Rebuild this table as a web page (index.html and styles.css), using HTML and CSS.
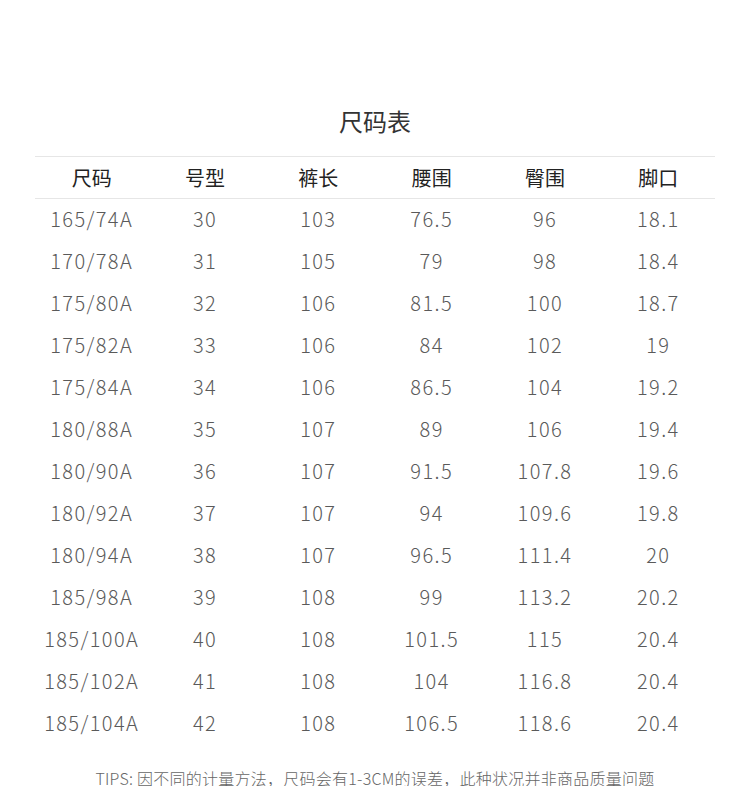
FILE: index.html
```html
<!DOCTYPE html>
<html lang="zh">
<head>
<meta charset="utf-8">
<title>尺码表</title>
<link rel="stylesheet" href="styles.css">
</head>
<body>
<div class="page">
  <h1 class="title">尺码表</h1>
  <div class="table">
    <div class="row head">
      <div>尺码</div><div>号型</div><div>裤长</div><div>腰围</div><div>臀围</div><div>脚口</div>
    </div>
    <div class="row"><div>165/74A</div><div>30</div><div>103</div><div>76.5</div><div>96</div><div>18.1</div></div>
    <div class="row"><div>170/78A</div><div>31</div><div>105</div><div>79</div><div>98</div><div>18.4</div></div>
    <div class="row"><div>175/80A</div><div>32</div><div>106</div><div>81.5</div><div>100</div><div>18.7</div></div>
    <div class="row"><div>175/82A</div><div>33</div><div>106</div><div>84</div><div>102</div><div>19</div></div>
    <div class="row"><div>175/84A</div><div>34</div><div>106</div><div>86.5</div><div>104</div><div>19.2</div></div>
    <div class="row"><div>180/88A</div><div>35</div><div>107</div><div>89</div><div>106</div><div>19.4</div></div>
    <div class="row"><div>180/90A</div><div>36</div><div>107</div><div>91.5</div><div>107.8</div><div>19.6</div></div>
    <div class="row"><div>180/92A</div><div>37</div><div>107</div><div>94</div><div>109.6</div><div>19.8</div></div>
    <div class="row"><div>180/94A</div><div>38</div><div>107</div><div>96.5</div><div>111.4</div><div>20</div></div>
    <div class="row"><div>185/98A</div><div>39</div><div>108</div><div>99</div><div>113.2</div><div>20.2</div></div>
    <div class="row"><div>185/100A</div><div>40</div><div>108</div><div>101.5</div><div>115</div><div>20.4</div></div>
    <div class="row"><div>185/102A</div><div>41</div><div>108</div><div>104</div><div>116.8</div><div>20.4</div></div>
    <div class="row"><div>185/104A</div><div>42</div><div>108</div><div>106.5</div><div>118.6</div><div>20.4</div></div>
  </div>
  <p class="tips">TIPS: 因不同的计量方法，尺码会有1-3CM的误差，此种状况并非商品质量问题</p>
</div>
</body>
</html>
```

FILE: styles.css
```css
html, body {
  margin: 0;
  padding: 0;
  background: #ffffff;
}
.page {
  width: 750px;
  padding-top: 105px;
  font-family: "Noto Sans CJK SC", "Noto Sans", sans-serif;
}
.title {
  margin: 0;
  font-size: 24px;
  line-height: 32px;
  font-weight: 400;
  color: #333333;
  text-align: center;
}
.table {
  margin: 19px 35px 0;
}
.row {
  display: grid;
  grid-template-columns: repeat(6, 1fr);
  height: 42px;
  line-height: 40px;
  align-items: start;
  text-align: center;
  font-size: 20px;
  font-weight: 300;
  color: #5a5a5a;
  letter-spacing: 1.4px;
}
.row.head {
  box-sizing: border-box;
  height: 43px;
  line-height: 41px;
  border-top: 1px solid #e6e6e6;
  border-bottom: 1px solid #e6e6e6;
  color: #222222;
  font-weight: 400;
  font-size: 20px;
  letter-spacing: 0;
}
.tips {
  margin: 25px 0 0;
  text-align: center;
  font-size: 16px;
  line-height: 16px;
  letter-spacing: 0.25px;
  color: #666666;
  font-weight: 300;
}
```
